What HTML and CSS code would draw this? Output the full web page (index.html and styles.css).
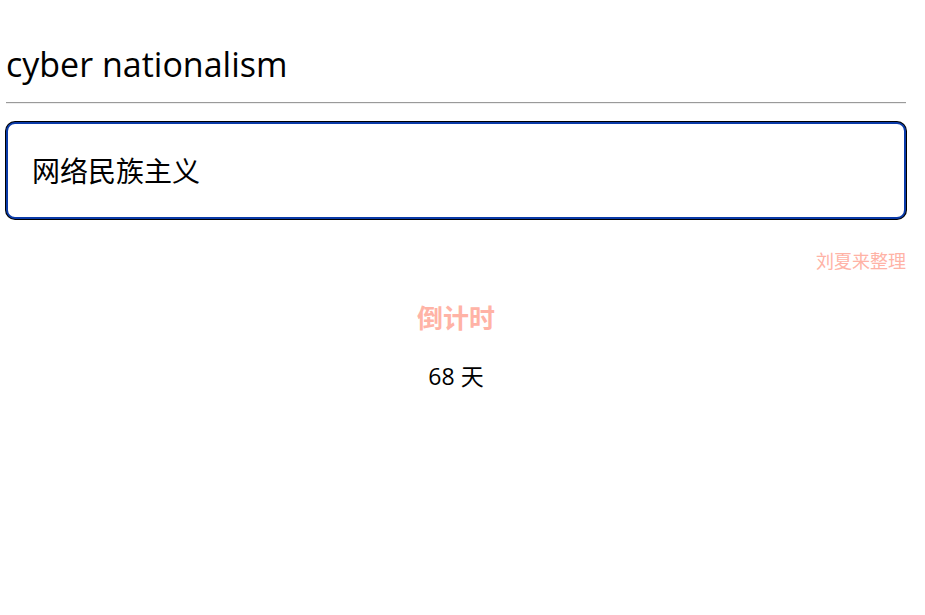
FILE: index.html
```html
<!DOCTYPE html>
<html lang="zh-CN">
<head>
    <meta charset="UTF-8">
    <meta name="viewport" content="width=device-width, initial-scale=1.0">
    <title>cyber nationalism</title>
    <link rel="stylesheet" href="styles.css">
</head>
<body>
    <div class="container">
        <h1 class="term">cyber nationalism</h1>
        <hr class="divider">

        <div class="answer-box">
            网络民族主义
        </div>

        <p class="credit">刘夏来整理</p>

        <div class="countdown">
            <h2 class="countdown-title">倒计时</h2>
            <p class="countdown-days">68 天</p>
        </div>
    </div>
</body>
</html>
```

FILE: styles.css
```css
body {
    font-family: "Open Sans", "Noto Sans CJK SC", sans-serif;
    background-color: #fff;
    color: #000;
    margin: 0;
    padding: 0;
}

.container {
    width: 900px;
    margin: 0 0 0 6px;
    padding-top: 40px;
}

.term {
    font-size: 34px;
    font-weight: 400;
    line-height: 48px;
    margin: 0 0 14px;
}

.divider {
    margin: 0 0 18px;
    border: none;
    border-top: 1px solid #9a9a9a;
    border-bottom: 1px solid #eeeeee;
}

.answer-box {
    box-sizing: border-box;
    height: 97px;
    display: flex;
    align-items: center;
    padding: 0 24px 2px;
    border: 2px solid #0a3aa8;
    border-radius: 9px;
    box-shadow: 0 0 0 1px #000;
    background-color: #fff;
    font-size: 28px;
}

.credit {
    text-align: right;
    color: #ffb3a6;
    font-size: 18px;
    margin: 29px 0 0;
    line-height: 26px;
}

.countdown {
    text-align: center;
}

.countdown-title {
    color: #ffb3a6;
    font-size: 26px;
    font-weight: 700;
    margin: 26px 0 0;
    line-height: 36px;
}

.countdown-days {
    font-size: 23px;
    margin: 24px 0 0;
    line-height: 32px;
}
```
